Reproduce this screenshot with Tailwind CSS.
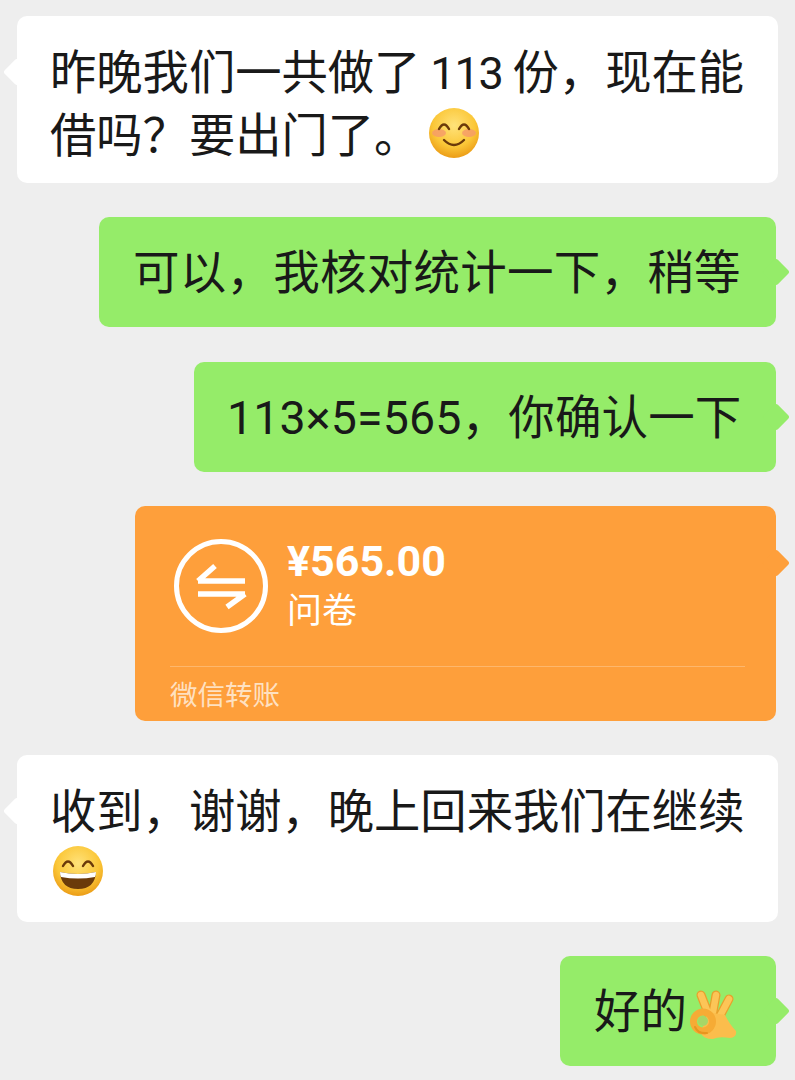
<!DOCTYPE html>
<html lang="zh-CN">
<head>
    <meta charset="UTF-8">
    <meta name="viewport" content="width=device-width, initial-scale=1.0">
    <title>聊天记录</title>
    <script src="https://cdn.jsdelivr.net/npm/@tailwindcss/browser@4"></script>
</head>
<body class="bg-[#eeeeee] font-['Roboto','Noto_Sans_CJK_SC',sans-serif] text-[#191919]">
    <svg width="0" height="0" class="absolute">
        <defs>
            <radialGradient id="face" cx="50%" cy="35%" r="70%">
                <stop offset="0%" stop-color="#ffe27a"/>
                <stop offset="60%" stop-color="#fbc738"/>
                <stop offset="100%" stop-color="#e8930f"/>
            </radialGradient>
        </defs>
    </svg>

    <div class="h-[1080px] overflow-hidden flex flex-col gap-[34px] pt-[16px]">
        <!-- 对方 -->
        <div class="relative ml-[17px] w-[761px] h-[167px] bg-white rounded-[10px] pl-[33px] pt-[26px] text-[46.3px] leading-[62px]">
            <div class="absolute left-[-10px] top-[46px] w-[20px] h-[20px] rotate-45 bg-white rounded-[3px]"></div>
            <p class="relative whitespace-nowrap">昨晚我们一共做了<span class="text-[45px] tracking-[-1.2px]"> 113 </span>份，现在能<br>借吗？要出门了。<svg class="inline-block align-[-7px] ml-[8px]" width="52" height="52" viewBox="0 0 52 52">
                <circle cx="26" cy="26" r="25" fill="url(#face)"/>
                <ellipse cx="11" cy="26" rx="7" ry="4" fill="#f59a6a" opacity=".8"/>
                <ellipse cx="41" cy="26" rx="7" ry="4" fill="#f59a6a" opacity=".8"/>
                <path d="M11 22q5-9 10 0M31 22q5-9 10 0M16 33q10 10 20 0" fill="none" stroke="#6b3a0a" stroke-width="2.4" stroke-linecap="round"/>
            </svg></p>
        </div>

        <!-- 我方 -->
        <div class="relative self-end mr-[19px] w-[677px] h-[110px] bg-[#95ec69] rounded-[10px] pl-[34px] pt-[4px] flex items-center text-[46.5px] tracking-[0.25px]">
            <div class="absolute right-[-10px] top-[45px] w-[20px] h-[20px] rotate-45 bg-[#95ec69] rounded-[3px]"></div>
            <p class="relative">可以，我核对统计一下，稍等</p>
        </div>

        <div class="relative self-end mr-[19px] mt-[1px] w-[582px] h-[110px] bg-[#95ec69] rounded-[10px] pl-[33px] pt-[4px] flex items-center text-[46.5px] tracking-[0.15px]">
            <div class="absolute right-[-10px] top-[45px] w-[20px] h-[20px] rotate-45 bg-[#95ec69] rounded-[3px]"></div>
            <p class="relative whitespace-nowrap">113×5=565，你确认一下</p>
        </div>

        <!-- 转账 -->
        <div class="relative self-end mr-[19px] w-[641px] h-[215px] bg-[#fe9f3b] rounded-[10px] text-white">
            <div class="absolute right-[-10px] top-[47px] w-[20px] h-[20px] rotate-45 bg-[#fe9f3b] rounded-[3px]"></div>
            <div class="relative flex items-start pl-[38px] pt-[32px] h-[160px]">
                <svg width="96" height="96" viewBox="0 0 96 96" class="shrink-0">
                    <circle cx="48" cy="48" r="44.5" fill="none" stroke="#fff" stroke-width="5"/>
                    <path d="M25 43h47M25 43l17-15M72 56H25M72 56l-18 13" fill="none" stroke="#fff" stroke-width="5.5"/>
                </svg>
                <div class="ml-[18px]">
                    <div class="font-bold text-[43px] leading-[46px]">¥565.00</div>
                    <div class="text-[35px] leading-[44px] mt-[6px]">问卷</div>
                </div>
            </div>
            <div class="relative ml-[35px] mr-[31px] border-t border-white/25 pt-[10px] text-[27.5px] leading-[38px] text-white/70">微信转账</div>
        </div>

        <!-- 对方 -->
        <div class="relative ml-[17px] w-[761px] h-[167px] bg-white rounded-[10px] pl-[33px] pt-[26px] text-[46.3px] leading-[62px]">
            <div class="absolute left-[-10px] top-[46px] w-[20px] h-[20px] rotate-45 bg-white rounded-[3px]"></div>
            <p class="relative whitespace-nowrap">收到，谢谢，晚上回来我们在继续<br><svg class="inline-block align-[-7px] ml-[2px]" width="52" height="52" viewBox="0 0 52 52">
                <circle cx="26" cy="26" r="25" fill="url(#face)"/>
                <path d="M11 21q5-9 10 0M31 21q5-9 10 0" fill="none" stroke="#6b3a0a" stroke-width="2.4" stroke-linecap="round"/>
                <path d="M8 27q18 4 36 0q-1 17-18 17T8 27z" fill="#6b3a0a"/>
                <path d="M8 27q18 4 36 0q0 3-1 5q-17 3-34 0q-1-2-1-5z" fill="#fff"/>
            </svg></p>
        </div>

        <div class="relative self-end mr-[19px] w-[216px] h-[110px] bg-[#95ec69] rounded-[10px] pl-[34px] pt-[4px] flex items-center text-[46.5px]">
            <div class="absolute right-[-10px] top-[45px] w-[20px] h-[20px] rotate-45 bg-[#95ec69] rounded-[3px]"></div>
            <p class="relative flex items-center">好的<svg class="shrink-0 ml-[2px] mt-[3px]" width="50" height="52" viewBox="0 0 50 52">
                <path d="M19 24L12 6M24 23L27 6M31 27L40 10" fill="none" stroke="#e8a02c" stroke-width="9" stroke-linecap="round"/>
                <path d="M19 24L12 6M24 23L27 6M31 27L40 10" fill="none" stroke="#fcc557" stroke-width="6.5" stroke-linecap="round"/>
                <path d="M18 23L36 26Q41 36 47 42Q48 48 41 49Q30 47 24 50Q14 50 12 44z" fill="#fbbd4c"/>
                <circle cx="14" cy="32.5" r="9.5" fill="none" stroke="#f6ab35" stroke-width="7"/>
                <circle cx="14" cy="32" r="5" fill="#a7d667"/>
                <path d="M6 38Q9 45 18 44" fill="none" stroke="#e8951f" stroke-width="2" stroke-linecap="round"/>
            </svg></p>
        </div>
    </div>
</body>
</html>
